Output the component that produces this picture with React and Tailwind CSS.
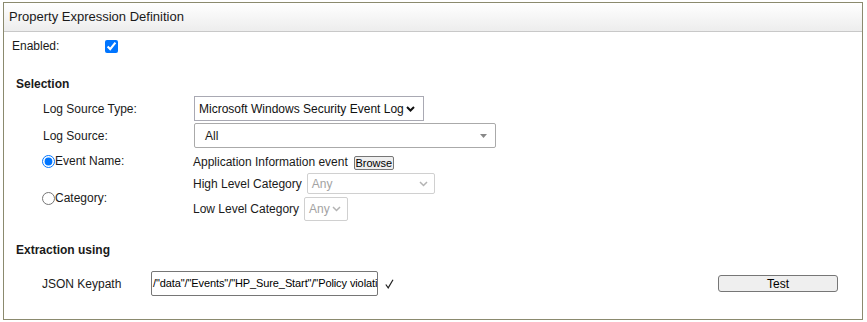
import React from 'react'

const Chevron = ({ color = '#111', width = 2 }) => (
  <svg width="9" height="6" viewBox="0 0 9 6" className="shrink-0">
    <polyline points="1,1 4.5,4.5 8,1" fill="none" stroke={color} strokeWidth={width} />
  </svg>
)

const App = () => {
  return (
    <div className="w-[867px] h-[322px] bg-white pt-[2px] pl-[3px] font-['Liberation_Sans',Arial,sans-serif] text-[12px] text-[#1a1a1a]">
      <div className="w-[860px] h-[318px] border border-[#8b8a6e] flex flex-col">
        {/* Header */}
        <div className="h-[29px] shrink-0 border-b border-[#c8c8c8] bg-gradient-to-b from-white to-[#ededed] pl-[5px] flex items-center text-[13px] text-[#1a1a1a]">
          Property Expression Definition
        </div>

        <div className="pl-[8px] flex flex-col">
          {/* Enabled */}
          <div className="mt-[6px] h-[16px] flex items-center">
            <span className="w-[93px]">Enabled:</span>
            <input type="checkbox" defaultChecked className="m-0 w-[13px] h-[13px]" />
          </div>

          {/* Selection */}
          <div className="mt-[23px] h-[14px] leading-[14px] pl-[4px] font-bold">Selection</div>

          <div className="ml-[31px] flex flex-col">
            <div className="mt-[5px] h-[25px] flex items-center">
              <span className="w-[151px]">Log Source Type:</span>
              <div className="w-[230px] h-[25px] border border-[#a9a9b3] pl-[4px] pr-[8px] flex items-center justify-between text-[#111] whitespace-nowrap">
                <span>Microsoft Windows Security Event Log</span>
                <Chevron />
              </div>
            </div>

            <div className="mt-[2px] h-[25px] flex items-center">
              <span className="w-[151px]">Log Source:</span>
              <div className="w-[302px] h-[25px] border border-[#aaa] rounded-[2px] pl-[10px] pr-[8px] flex items-center justify-between">
                <span>All</span>
                <svg width="7" height="4" viewBox="0 0 7 4">
                  <polygon points="0,0 7,0 3.5,4" fill="#888" />
                </svg>
              </div>
            </div>

            <div className="mt-[4px] h-[18px] flex items-center">
              <label className="w-[151px] flex items-center -ml-px">
                <input type="radio" name="sel" defaultChecked className="m-0 w-[13px] h-[13px]" />
                <span>Event Name:</span>
              </label>
              <span className="pt-px">Application Information event</span>
              <button className="ml-[6px] self-end w-[40px] h-[14px] border border-[#767676] rounded-[2px] bg-[#efefef] text-[11px] leading-none text-black flex items-center justify-center">
                Browse
              </button>
            </div>

            <div className="mt-[3px] flex">
              <label className="w-[151px] flex items-center -ml-px pt-[2px]">
                <input type="radio" name="sel" className="m-0 w-[13px] h-[13px]" />
                <span>Category:</span>
              </label>
              <div className="flex flex-col gap-[3px]">
                <div className="h-[21px] flex items-center">
                  <span>High Level Category</span>
                  <div className="ml-[5px] w-[128px] h-[21px] border border-[#d0d0d0] rounded-[2px] pl-[4px] pr-[6px] flex items-center justify-between text-[#a3a3a3]">
                    <span>Any</span>
                    <Chevron color="#b3b3b3" width={1.5} />
                  </div>
                </div>
                <div className="h-[24px] flex items-center">
                  <span>Low Level Category</span>
                  <div className="ml-[5px] w-[44px] h-[24px] border border-[#d0d0d0] rounded-[2px] pl-[4px] pr-[6px] flex items-center justify-between text-[#a3a3a3]">
                    <span>Any</span>
                    <Chevron color="#b3b3b3" width={1.5} />
                  </div>
                </div>
              </div>
            </div>
          </div>

          {/* Extraction */}
          <div className="mt-[22px] h-[14px] leading-[14px] pl-[4px] font-bold">Extraction using</div>

          <div className="mt-[14px] h-[25px] flex items-center pr-[24px]">
            <span className="ml-[30px] w-[109px]">JSON Keypath</span>
            <div className="w-[227px] h-[25px] border border-[#767676] rounded-[2px] pl-[1px] flex items-center overflow-hidden whitespace-nowrap text-[11px] tracking-[-0.1px] text-black">
              /"data"/"Events"/"HP_Sure_Start"/"Policy violation"
            </div>
            <svg width="9" height="10" viewBox="0 0 9 10" className="ml-[7px]">
              <polyline points="0.8,5.5 3.2,8.8 8,0.8" fill="none" stroke="#222" strokeWidth="1.2" />
            </svg>
            <div className="flex-1" />
            <button className="w-[120px] h-[17px] border border-[#767676] rounded-[3px] bg-[#efefef] text-[12px] leading-none text-black flex items-center justify-center">
              Test
            </button>
          </div>
        </div>
      </div>
    </div>
  )
}

export default App
